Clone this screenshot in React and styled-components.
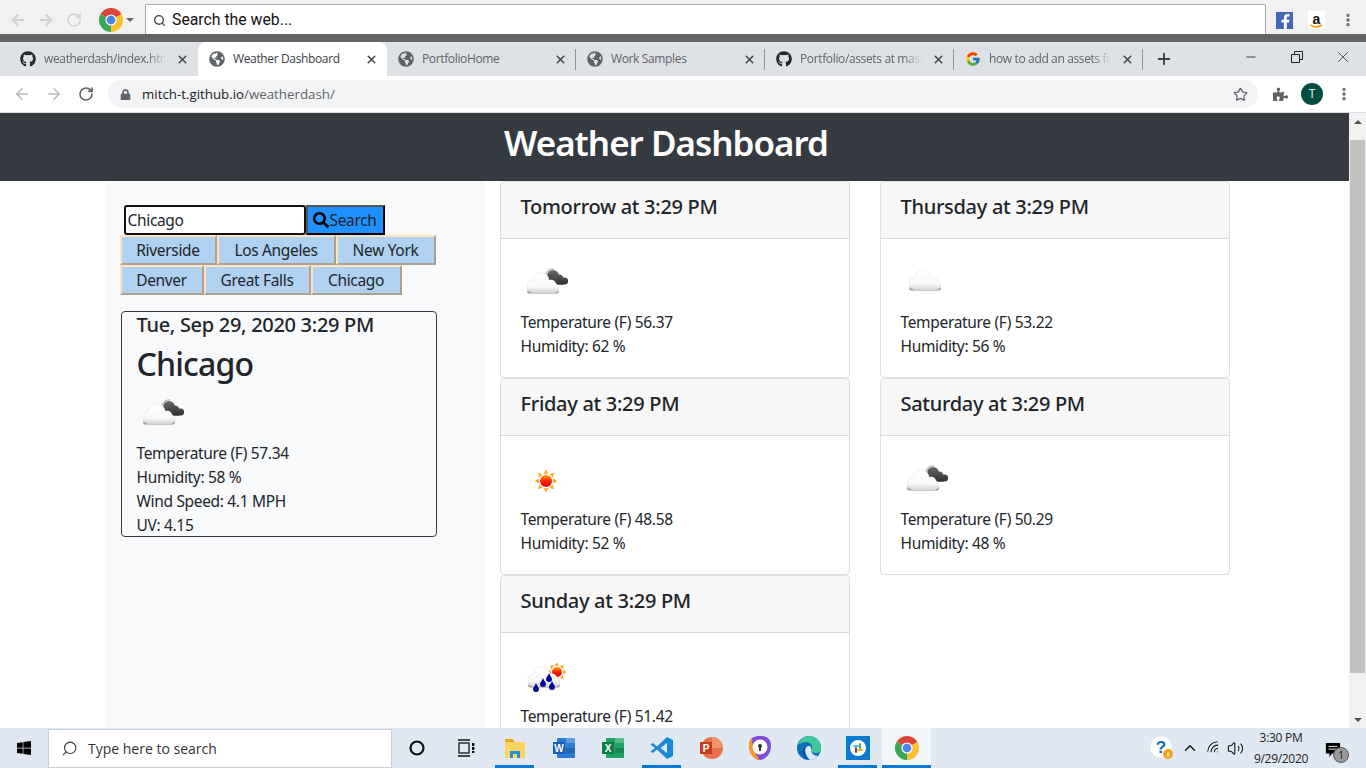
import React from 'react';
import styled, { createGlobalStyle } from 'styled-components';
import { ArrowLeft, ArrowRight, RotateCw, Star, X, Plus, Minus, EllipsisVertical, Search as LensIcon, ChevronUp, Volume2, Wifi } from 'lucide-react';
import { FaGithub, FaGlobeAmericas, FaLock, FaPuzzlePiece, FaWindows, FaFacebookF, FaSearch } from 'react-icons/fa';
import { FcGoogle } from 'react-icons/fc';

const GlobalStyle = createGlobalStyle`
  * { box-sizing: border-box; }
  html, body { margin: 0; height: 100%; overflow: hidden; }
  body {
    font-family: "Noto Sans", "Open Sans", sans-serif;
    font-size: 16px;
    line-height: 24px;
    color: #212529;
    background: #fff;
  }
`;

const Screen = styled.div`
  width: 1366px;
  height: 768px;
  display: flex;
  flex-direction: column;
  overflow: hidden;
`;

/* top bar of the browser extension */
const ExtBar = styled.div`
  height: 34px;
  flex: none;
  display: flex;
  align-items: flex-end;
  background: #f1f1f1;
  padding-left: 4px;
`;

const ExtNav = styled.div`
  width: 28px;
  height: 30px;
  padding-top: 2px;
  display: flex;
  align-items: center;
  justify-content: center;
  color: #d2d2d2;
`;

const ExtLogo = styled.div`
  width: 57px;
  height: 30px;
  padding: 2px 0 0 11px;
  display: flex;
  align-items: center;
  gap: 3px;
`;

const Caret = styled.span`
  border-left: 4px solid transparent;
  border-right: 4px solid transparent;
  border-top: 4px solid #666;
`;

const ExtSearch = styled.div`
  width: 1121px;
  height: 30px;
  display: flex;
  align-items: center;
  gap: 6px;
  padding: 1px 0 0 7px;
  background: #fff;
  border: 1px solid #aaa;
  border-bottom: none;
  border-radius: 2px 2px 0 0;
  font-family: "Roboto", sans-serif;
  font-size: 15.8px;
  color: #111;
`;

const ExtLinks = styled.div`
  display: flex;
  padding-left: 2px;
`;

const ExtRight = styled.div`
  width: 32px;
  height: 30px;
  padding-top: 2px;
  display: flex;
  align-items: center;
  justify-content: center;
  color: #666;
`;

const FbTile = styled.div`
  width: 17px;
  height: 17px;
  display: flex;
  align-items: flex-end;
  justify-content: flex-end;
  background: #4267b2;
  color: #fff;
  overflow: hidden;
`;

const DarkBand = styled.div`
  height: 8px;
  flex: none;
  background: #636466;
`;

const TabStrip = styled.div`
  height: 34px;
  flex: none;
  display: flex;
  background: #dee1e6;
  padding-left: 9px;
`;

const Tab = styled.div`
  width: 189px;
  height: 34px;
  display: flex;
  align-items: center;
  gap: 8px;
  padding: 0 8px 0 11px;
  position: relative;
  font-family: "Open Sans", sans-serif;
  font-size: 12px;
  letter-spacing: -0.36px;
  color: ${p => (p.$active ? '#3c4043' : '#5f6368')};
  background: ${p => (p.$active ? '#fff' : 'transparent')};
  border-radius: 8px 8px 0 0;
`;

const TabSep = styled.span`
  position: absolute;
  right: 0;
  top: 7px;
  bottom: 6px;
  width: 1px;
  background: #90949a;
`;

const TabTitle = styled.span`
  flex: 1;
  min-width: 0;
  overflow: hidden;
  white-space: nowrap;
  ${p => p.$fade && 'mask-image: linear-gradient(to right, #000 85%, transparent);'}
`;

const TabIcon = styled.span`
  width: 16px;
  height: 16px;
  flex: none;
  display: flex;
  color: #5f6368;
`;

const TabClose = styled.span`
  width: 16px;
  height: 16px;
  flex: none;
  display: flex;
  align-items: center;
  justify-content: center;
  color: #45484c;
`;

const NewTab = styled.div`
  width: 42px;
  display: flex;
  align-items: center;
  justify-content: center;
  color: #3c4043;
`;

const WindowControls = styled.div`
  margin-left: auto;
  display: flex;
`;

const WindowButton = styled.div`
  width: 46px;
  height: 30px;
  display: flex;
  align-items: center;
  justify-content: center;
  color: #222;
`;

const AddressBar = styled.div`
  height: 37px;
  flex: none;
  display: flex;
  align-items: center;
  background: #fff;
  padding-left: 6px;
  border-bottom: 1px solid #dadce0;
`;

const NavButton = styled.div`
  width: 32px;
  height: 28px;
  display: flex;
  align-items: center;
  justify-content: center;
  color: ${p => (p.$dim ? '#b6b8bb' : '#5f6368')};
`;

const Omnibox = styled.div`
  width: 1150px;
  height: 28px;
  margin-left: 6px;
  padding: 0 10px 0 12px;
  display: flex;
  align-items: center;
  gap: 11px;
  border-radius: 14px;
  background: #f1f3f4;
  color: #5f6368;
  font-family: "Open Sans", sans-serif;
  font-size: 13.3px;
`;

const Url = styled.span`
  flex: 1;
  color: #5f6368;
  b { font-weight: 400; color: #202124; }
`;

const Toolbar = styled.div`
  margin-left: 6px;
  display: flex;
  align-items: center;
`;

const ToolButton = styled.div`
  width: 32px;
  height: 28px;
  display: flex;
  align-items: center;
  justify-content: center;
  color: #5f6368;
`;

const Avatar = styled.div`
  width: 22px;
  height: 22px;
  border-radius: 50%;
  background: #004d40;
  color: #e8f0ee;
  font-size: 12px;
  line-height: 22px;
  text-align: center;
`;

/* the page itself */
const Viewport = styled.div`
  flex: 1;
  min-height: 0;
  display: flex;
`;

const Page = styled.div`
  flex: 1;
  min-width: 0;
  display: flex;
  flex-direction: column;
  overflow: hidden;
`;

const PageHeader = styled.header`
  height: 68px;
  flex: none;
  display: flex;
  align-items: center;
  justify-content: center;
  padding: 0 17px 10px 0;
  background: #343a40;
`;

const Title = styled.h1`
  margin: 0;
  font-size: 35px;
  line-height: 43px;
  font-weight: 600;
  letter-spacing: -1px;
  color: #fff;
`;

const Container = styled.div`
  width: 1140px;
  flex: 1;
  min-height: 0;
  margin: 0 auto;
  display: flex;
  font-size: 15.5px;
  letter-spacing: -0.33px;
`;

const Sidebar = styled.aside`
  width: 380px;
  flex: none;
  padding: 24px 15px 0;
  background: #f8f9fa;
`;

const SearchForm = styled.form`
  display: flex;
  height: 30px;
  margin-left: 4px;
`;

const CityInput = styled.input`
  width: 182px;
  height: 30px;
  padding: 0 2px;
  border: 2px solid #111;
  border-radius: 3px;
  background: #fff;
  outline: none;
  font: inherit;
  letter-spacing: inherit;
  color: #212529;
`;

const SearchButton = styled.button`
  width: 79px;
  height: 30px;
  padding: 0;
  display: flex;
  align-items: center;
  justify-content: center;
  background: #1e90ff;
  border: 2px outset #555;
  font: inherit;
  letter-spacing: inherit;
  color: #212529;
`;

const CityList = styled.div`
  display: flex;
  flex-wrap: wrap;
  width: 320px;
`;

const CityButton = styled.button`
  width: ${p => p.$width}px;
  height: 30px;
  padding: 0;
  background: #b0d1f0;
  border: 2px solid;
  border-color: #ffe4c4 #ab9f8f #ab9f8f #ffe4c4;
  font: inherit;
  letter-spacing: inherit;
  color: #212529;
`;

const CurrentCard = styled.section`
  width: 316px;
  height: 226px;
  margin: 16px 0 0 1px;
  padding: 1px 15px 0;
  border: 1px solid #343a40;
  border-radius: 4px;
  overflow: hidden;
  svg { margin-bottom: 1px; }
`;

const CardHeading = styled.h5`
  margin: 0 0 8px;
  font-size: 20px;
  line-height: 24px;
  font-weight: 500;
  letter-spacing: -0.3px;
`;

const CityName = styled.h2`
  margin: 1px 0 7px;
  font-size: 32px;
  line-height: 38.4px;
  font-weight: 500;
  letter-spacing: -0.8px;
`;

const Line = styled.p`
  margin: 0;
`;

const Forecast = styled.main`
  flex: 1;
  padding: 0 15px;
  display: grid;
  grid-template-columns: 350px 350px;
  column-gap: 30px;
  align-content: start;
`;

const ForecastCard = styled.article`
  height: 197px;
  border: 1px solid rgba(0, 0, 0, 0.125);
  border-radius: 4px;
  overflow: hidden;
`;

const ForecastHeader = styled.div`
  height: 57px;
  padding: 13px 20px 0;
  background: rgba(0, 0, 0, 0.03);
  border-bottom: 1px solid rgba(0, 0, 0, 0.125);
`;

const ForecastBody = styled.div`
  padding: 20px 20px 0;
  svg { margin-bottom: 1px; }
`;

const WeatherPic = styled.svg`
  display: block;
  width: 50px;
  height: 50px;
`;

const Scrollbar = styled.div`
  width: 17px;
  flex: none;
  display: flex;
  flex-direction: column;
  align-items: center;
  background: #f1f1f1;
`;

const ScrollArrow = styled.div`
  width: 17px;
  height: 17px;
  flex: none;
  display: flex;
  align-items: center;
  justify-content: center;
  &::before {
    content: '';
    border-left: 4px solid transparent;
    border-right: 4px solid transparent;
    ${p => (p.$down ? 'border-top: 4px solid #505050;' : 'border-bottom: 4px solid #505050;')}
  }
`;

const ScrollThumb = styled.div`
  width: 15px;
  height: 533px;
  margin-top: 10px;
  background: #c1c1c1;
`;

const ScrollGap = styled.div`
  flex: 1;
`;

/* windows taskbar */
const Taskbar = styled.footer`
  height: 40px;
  flex: none;
  display: flex;
  align-items: center;
  background: #e0e8f3;
`;

const StartButton = styled.div`
  width: 48px;
  display: flex;
  align-items: center;
  justify-content: center;
  color: #000;
`;

const TaskSearch = styled.div`
  width: 344px;
  height: 39px;
  display: flex;
  align-items: center;
  gap: 10px;
  padding: 1px 0 0 12px;
  background: #fff;
  border: 1px solid #c9cfd6;
  font-family: "Open Sans", sans-serif;
  font-size: 14px;
  color: #333;
`;

const TaskLens = styled(LensIcon)`
  transform: scaleX(-1);
`;

const TaskItem = styled.div`
  width: 49px;
  height: 40px;
  display: flex;
  align-items: center;
  justify-content: center;
  background: ${p => (p.$current ? '#f2f5f9' : 'transparent')};
  ${p => p.$open && 'box-shadow: inset 0 -3px 0 0 #0078d7;'}
  ${p => p.$open && !p.$current && 'clip-path: inset(0 5px);'}
`;

const Tray = styled.div`
  margin-left: auto;
  display: flex;
  align-items: center;
  color: #111;
`;

const TrayIcon = styled.div`
  width: ${p => p.$w}px;
  height: 40px;
  display: flex;
  align-items: center;
  justify-content: center;
`;

const TrayWifi = styled(Wifi)`
  transform: rotate(-45deg);
`;

const Clock = styled.div`
  width: 72px;
  text-align: center;
  font-family: "Open Sans", sans-serif;
  font-size: 12px;
  line-height: 21px;
  letter-spacing: -0.3px;
  color: #222;
`;

const Notify = styled.div`
  width: 49px;
  height: 40px;
  padding: 12px 0 0 8px;
  position: relative;
`;

const NotifyBadge = styled.span`
  position: absolute;
  right: 17px;
  bottom: 5px;
  width: 16px;
  height: 16px;
  border-radius: 50%;
  background: #9a9a9a;
  border: 1px solid #555;
  font-family: "Open Sans", sans-serif;
  font-size: 10px;
  line-height: 14px;
  text-align: center;
  color: #111;
`;

/* drawn pictures */
const ChromeLogo = ({ size = 24 }) => (
  <svg width={size} height={size} viewBox="0 0 24 24">
    <path d="M12 12 1.6 6A12 12 0 0 1 22.4 6Z" fill="#db4437" />
    <path d="M12 12 22.4 6A12 12 0 0 1 12 24Z" fill="#fbc02d" />
    <path d="M12 12 12 24A12 12 0 0 1 1.6 6Z" fill="#3aa757" />
    <circle cx="12" cy="12" r="5.6" fill="#fff" />
    <circle cx="12" cy="12" r="4.4" fill="#4a86e8" />
  </svg>
);

const AmazonTile = () => (
  <svg width="17" height="18" viewBox="0 0 17 18">
    <rect width="17" height="18" fill="#fff" />
    <text x="8.500" y="13" textAnchor="middle" fontSize="14" fontWeight="700" fontFamily="Liberation Sans" fill="#111">a</text>
    <path d="M2.500 14c3 2.500 8 2.500 11.500 0" fill="none" stroke="#f90" strokeWidth="1.600" />
  </svg>
);

const Gradients = () => (
  <defs>
    <linearGradient id="cloudFill" gradientUnits="userSpaceOnUse" x1="0" y1="14" x2="0" y2="34">
      <stop offset="0" stopColor="#fff" />
      <stop offset="0.7" stopColor="#f8f8f8" />
      <stop offset="1" stopColor="#d2d2d2" />
    </linearGradient>
    <linearGradient id="cloudBase" gradientUnits="userSpaceOnUse" x1="0" y1="29" x2="0" y2="35">
      <stop offset="0" stopColor="#e2e2e2" />
      <stop offset="1" stopColor="#8c8c8c" />
    </linearGradient>
    <linearGradient id="darkFill" gradientUnits="userSpaceOnUse" x1="0" y1="11" x2="0" y2="26">
      <stop offset="0" stopColor="#6a6a6a" />
      <stop offset="1" stopColor="#2e2e2e" />
    </linearGradient>
    <linearGradient id="sunFill" x1="0" y1="0" x2="0" y2="1">
      <stop offset="0" stopColor="#ffa000" />
      <stop offset="0.55" stopColor="#ff1a00" />
      <stop offset="1" stopColor="#f00000" />
    </linearGradient>
  </defs>
);

const CloudShapes = () => (
  <>
    <circle cx="12" cy="27" r="6" />
    <circle cx="20" cy="22" r="8" />
    <circle cx="30" cy="26" r="5" />
    <circle cx="33" cy="29" r="4.5" />
    <rect x="9" y="26" width="26" height="7.5" rx="3" />
  </>
);

const WhiteCloud = ({ dx = 0, dy = 0 }) => (
  <g transform={`translate(${dx} ${dy})`}>
    <rect x="6" y="30" width="32" height="4.5" rx="2.2" fill="url(#cloudBase)" />
    <g fill="#dcdcdc" stroke="#dcdcdc" strokeWidth="0.8"><CloudShapes /></g>
    <g fill="url(#cloudFill)"><CloudShapes /></g>
  </g>
);

const DarkCloud = () => (
  <g>
    <path d="M25 20A7.500 7.500 0 0 1 33 10" fill="none" stroke="#b5b5b5" strokeWidth="1.200" />
    <g fill="url(#darkFill)">
      <circle cx="32" cy="17" r="6" />
      <circle cx="38" cy="20" r="4.500" />
      <circle cx="43.500" cy="22" r="3.600" />
      <rect x="30" y="20" width="14" height="5.800" rx="2.800" />
    </g>
  </g>
);

const Sun = ({ cx = 25, cy = 25, r = 6, ray = 11.5 }) => (
  <g>
    {[0, 45, 90, 135, 180, 225, 270, 315].map(a => (
      <path
        key={a}
        transform={`rotate(${a} ${cx} ${cy})`}
        d={`M${cx - 2.4} ${cy - r - 1.2} L${cx} ${cy - ray} L${cx + 2.4} ${cy - r - 1.2}Z`}
        fill="#ffa726"
      />
    ))}
    <circle cx={cx} cy={cy} r={r} fill="url(#sunFill)" />
  </g>
);

const Drop = ({ x, y }) => (
  <path d={`M${x} ${y - 5}C${x + 1} ${y - 2} ${x + 3} ${y - 1} ${x + 3} ${y + 1}A3 3 0 0 1 ${x - 3} ${y + 1}C${x - 3} ${y - 1} ${x - 1} ${y - 2} ${x} ${y - 5}Z`} fill="#00068f" />
);

const WeatherIcon = ({ kind }) => (
  <WeatherPic viewBox="0 0 50 50">
    <Gradients />
    {kind === 'broken' && (
      <>
        <DarkCloud />
        <WhiteCloud />
      </>
    )}
    {kind === 'cloud' && <WhiteCloud dx={2} dy={-3} />}
    {kind === 'sun' && <Sun />}
    {kind === 'rain' && (
      <>
        <Sun cx={36} cy={19} r={5} ray={9.5} />
        <WhiteCloud dx={1} />
        <Drop x={15} y={35} />
        <Drop x={22} y={30} />
        <Drop x={28} y={25} />
        <Drop x={31} y={33} />
      </>
    )}
  </WeatherPic>
);

const RestoreIcon = () => (
  <svg width="12" height="12" viewBox="0 0 12 12" fill="none" stroke="#222">
    <path d="M.5 3.5h8v8h-8zM3.5 3V.5h8v8H9" />
  </svg>
);

const TaskViewIcon = () => (
  <svg width="18" height="18" viewBox="0 0 18 18" fill="none" stroke="#111" strokeWidth="1.3">
    <path d="M1 1h12M1 17h12" />
    <rect x="2" y="4" width="10" height="10" />
    <rect x="15" y="4" width="2.4" height="3" fill="#111" stroke="none" />
    <rect x="15" y="8" width="2.4" height="3" fill="#111" stroke="none" />
    <rect x="15" y="12" width="2.4" height="2" fill="#111" stroke="none" />
  </svg>
);

const FolderIcon = () => (
  <svg width="24" height="24" viewBox="0 0 24 24">
    <path d="M2 3h8l2 3H2z" fill="#e8a820" />
    <rect x="2" y="6" width="20" height="16" fill="#fcd462" />
    <rect x="7" y="15" width="10" height="7" fill="#2a8fd8" />
    <rect x="10" y="18" width="4" height="4" fill="#fcd462" />
  </svg>
);

const OfficeIcon = ({ letter, back, tile }) => (
  <svg width="24" height="24" viewBox="0 0 24 24">
    <rect x="5" y="2" width="18" height="20" rx="1" fill={back} />
    <rect x="14" y="2" width="9" height="5" fill="#fff" opacity=".25" />
    <rect x="14" y="12" width="9" height="5" fill="#000" opacity=".18" />
    <rect x="1" y="6" width="12" height="12" fill={tile} />
    <text x="7" y="15.5" textAnchor="middle" fontSize="10" fontWeight="700" fontFamily="Liberation Sans" fill="#fff">{letter}</text>
  </svg>
);

const VsCodeIcon = () => (
  <svg width="24" height="26" viewBox="0 0 24 24">
    <path d="M17 1 23 4v16l-6 3-10-9.600L2.700 17 .5 15.500 5 12 .5 8.500 2.700 7 7 10.600Z" fill="#1e88d8" />
    <path d="M17 7 10.500 12l6.500 5Z" fill="#e0e8f3" />
  </svg>
);

const PowerPointIcon = () => (
  <svg width="24" height="24" viewBox="0 0 24 24">
    <circle cx="13" cy="12" r="11" fill="#e8704d" />
    <path d="M13 1a11 11 0 0 1 11 11H13Z" fill="#f0936f" />
    <rect x="1" y="6" width="12" height="12" fill="#c43e1c" />
    <text x="7" y="15.500" textAnchor="middle" fontSize="10" fontWeight="700" fontFamily="Liberation Sans" fill="#fff">P</text>
  </svg>
);

const SecureIcon = () => (
  <svg width="24" height="26" viewBox="0 0 24 26">
    <path d="M12 1C18 1 23 3 23 11C23 19 17 25 12 25C7 25 1 19 1 11C1 3 6 1 12 1Z" fill="#7c4dd8" />
    <path d="M12 25C7 25 1 19 1 11C1 7 2 5 4 3C4 12 8 20 12 25Z" fill="#f59a23" />
    <circle cx="12" cy="12" r="7.500" fill="#fff" />
    <circle cx="12" cy="11" r="2" fill="#333" />
    <rect x="11" y="12" width="2" height="4" fill="#333" />
  </svg>
);

const EdgeIcon = () => (
  <svg width="24" height="24" viewBox="0 0 24 24">
    <circle cx="12" cy="12" r="12" fill="#0f6cbd" />
    <path d="M1 9C3 2 9 0 12 0c7 0 12 5 12 12 0 3-2 5-5 5-3 0-5-1-5-3 0-1 1-1 1-3 0-3-3-5-6-5-4 0-7 2-8 3Z" fill="#3fc99a" />
    <path d="M14 14c0 3 3 6 7 6-2 2-5 4-8 4 -3-3-5-6-5-10 0-2 2-4 4-4s2 2 2 4Z" fill="#e0e8f3" />
    <path d="M12 24c-3-3-4-6-4-10 0-1 .4-2 1-2.600C6 12 5 15 6 18c1 3 3 5 6 6Z" fill="#0a4f9e" />
  </svg>
);

const SlackIcon = () => (
  <svg width="24" height="24" viewBox="0 0 24 24">
    <rect width="24" height="24" fill="#0c78d0" />
    <circle cx="12" cy="12" r="8" fill="#fff" />
    <rect x="7" y="9" width="6" height="2" rx="1" fill="#36c5f0" />
    <rect x="13" y="7" width="2" height="6" rx="1" fill="#2eb67d" />
    <rect x="11" y="13" width="6" height="2" rx="1" fill="#ecb22e" />
    <rect x="9" y="11" width="2" height="6" rx="1" fill="#e01e5a" />
  </svg>
);

const HelpIcon = () => (
  <svg width="24" height="24" viewBox="0 0 24 24">
    <circle cx="11" cy="11" r="10.500" fill="#fff" />
    <text x="11" y="17" textAnchor="middle" fontSize="17" fontWeight="700" fontFamily="Liberation Sans" fill="#0a6ccf">?</text>
    <circle cx="18" cy="18" r="5" fill="#f3a21c" />
    <rect x="17.300" y="16.500" width="1.400" height="4" fill="#fff" />
  </svg>
);

const NotifyIcon = () => (
  <svg width="16" height="16" viewBox="0 0 18 18">
    <path d="M1 1h16v12H8l-3 4v-4H1z" fill="#000" />
    <path d="M4 5h10M4 8h10" stroke="#fff" />
  </svg>
);

const tabs = [
  { title: 'weatherdash/index.html', icon: <FaGithub size={16} color="#24292e" />, fade: true },
  { title: 'Weather Dashboard', icon: <FaGlobeAmericas size={16} />, active: true },
  { title: 'PortfolioHome', icon: <FaGlobeAmericas size={16} />, sep: true },
  { title: 'Work Samples', icon: <FaGlobeAmericas size={16} />, sep: true },
  { title: 'Portfolio/assets at master', icon: <FaGithub size={16} color="#24292e" />, fade: true, sep: true },
  { title: 'how to add an assets folder', icon: <FcGoogle size={16} />, fade: true, sep: true },
];

const cityRows = [
  { name: 'Riverside', width: 97 },
  { name: 'Los Angeles', width: 119 },
  { name: 'New York', width: 100 },
  { name: 'Denver', width: 84 },
  { name: 'Great Falls', width: 107 },
  { name: 'Chicago', width: 91 },
];

const forecast = [
  { day: 'Tomorrow', icon: 'broken', temp: '56.37', humidity: 62 },
  { day: 'Thursday', icon: 'cloud', temp: '53.22', humidity: 56 },
  { day: 'Friday', icon: 'sun', temp: '48.58', humidity: 52 },
  { day: 'Saturday', icon: 'broken', temp: '50.29', humidity: 48 },
  { day: 'Sunday', icon: 'rain', temp: '51.42', humidity: 50 },
];

const App = () => (
  <Screen>
    <GlobalStyle />

    <ExtBar>
      <ExtNav><ArrowLeft size={18} strokeWidth={2.5} /></ExtNav>
      <ExtNav><ArrowRight size={18} strokeWidth={2.5} /></ExtNav>
      <ExtNav><RotateCw size={16} strokeWidth={2.5} /></ExtNav>
      <ExtLogo><ChromeLogo /><Caret /></ExtLogo>
      <ExtSearch><LensIcon size={13} strokeWidth={2.5} color="#444" />Search the web...</ExtSearch>
      <ExtLinks>
        <ExtRight><FbTile><FaFacebookF size={15} /></FbTile></ExtRight>
        <ExtRight><AmazonTile /></ExtRight>
        <ExtRight><EllipsisVertical size={16} strokeWidth={3} /></ExtRight>
      </ExtLinks>
    </ExtBar>
    <DarkBand />

    <TabStrip>
      {tabs.map(tab => (
        <Tab key={tab.title} $active={tab.active}>
          <TabIcon>{tab.icon}</TabIcon>
          <TabTitle $fade={tab.fade}>{tab.title}</TabTitle>
          <TabClose><X size={13} strokeWidth={3} /></TabClose>
          {tab.sep && <TabSep />}
        </Tab>
      ))}
      <NewTab><Plus size={18} strokeWidth={2.5} /></NewTab>
      <WindowControls>
        <WindowButton><Minus size={14} strokeWidth={1.5} /></WindowButton>
        <WindowButton><RestoreIcon /></WindowButton>
        <WindowButton><X size={18} strokeWidth={1} /></WindowButton>
      </WindowControls>
    </TabStrip>

    <AddressBar>
      <NavButton $dim><ArrowLeft size={18} /></NavButton>
      <NavButton $dim><ArrowRight size={18} /></NavButton>
      <NavButton><RotateCw size={16} strokeWidth={2.5} /></NavButton>
      <Omnibox>
        <FaLock size={11} />
        <Url><b>mitch-t.github.io</b>/weatherdash/</Url>
        <Star size={15} strokeWidth={2} />
      </Omnibox>
      <Toolbar>
        <ToolButton><FaPuzzlePiece size={15} /></ToolButton>
        <ToolButton><Avatar>T</Avatar></ToolButton>
        <ToolButton><EllipsisVertical size={16} strokeWidth={3} /></ToolButton>
      </Toolbar>
    </AddressBar>

    <Viewport>
      <Page>
        <PageHeader>
          <Title>Weather Dashboard</Title>
        </PageHeader>
        <Container>
          <Sidebar>
            <SearchForm onSubmit={e => e.preventDefault()}>
              <CityInput defaultValue="Chicago" />
              <SearchButton type="submit"><FaSearch size={16} color="#000" />Search</SearchButton>
            </SearchForm>
            <CityList>
              {cityRows.map(city => (
                <CityButton key={city.name} $width={city.width}>{city.name}</CityButton>
              ))}
            </CityList>
            <CurrentCard>
              <CardHeading>Tue, Sep 29, 2020 3:29 PM</CardHeading>
              <CityName>Chicago</CityName>
              <WeatherIcon kind="broken" />
              <Line>Temperature (F) 57.34</Line>
              <Line>Humidity: 58 %</Line>
              <Line>Wind Speed: 4.1 MPH</Line>
              <Line>UV: 4.15</Line>
            </CurrentCard>
          </Sidebar>
          <Forecast>
            {forecast.map(item => (
              <ForecastCard key={item.day}>
                <ForecastHeader>
                  <CardHeading>{item.day} at 3:29 PM</CardHeading>
                </ForecastHeader>
                <ForecastBody>
                  <WeatherIcon kind={item.icon} />
                  <Line>Temperature (F) {item.temp}</Line>
                  <Line>Humidity: {item.humidity} %</Line>
                </ForecastBody>
              </ForecastCard>
            ))}
          </Forecast>
        </Container>
      </Page>
      <Scrollbar>
        <ScrollArrow />
        <ScrollThumb />
        <ScrollGap />
        <ScrollArrow $down />
      </Scrollbar>
    </Viewport>

    <Taskbar>
      <StartButton><FaWindows size={16} /></StartButton>
      <TaskSearch>
        <TaskLens size={17} strokeWidth={1.5} />
        Type here to search
      </TaskSearch>
      <TaskItem>
        <svg width="16" height="16" viewBox="0 0 16 16"><circle cx="8" cy="8" r="6.500" fill="none" stroke="#111" strokeWidth="2.200" /></svg>
      </TaskItem>
      <TaskItem><TaskViewIcon /></TaskItem>
      <TaskItem $open><FolderIcon /></TaskItem>
      <TaskItem><OfficeIcon letter="W" back="#2b7cd3" tile="#185abd" /></TaskItem>
      <TaskItem><OfficeIcon letter="X" back="#21a366" tile="#107c41" /></TaskItem>
      <TaskItem $open><VsCodeIcon /></TaskItem>
      <TaskItem><PowerPointIcon /></TaskItem>
      <TaskItem><SecureIcon /></TaskItem>
      <TaskItem><EdgeIcon /></TaskItem>
      <TaskItem $open><SlackIcon /></TaskItem>
      <TaskItem $open $current><ChromeLogo /></TaskItem>
      <Tray>
        <TrayIcon $w={30}><HelpIcon /></TrayIcon>
        <TrayIcon $w={26}><ChevronUp size={18} strokeWidth={1.8} /></TrayIcon>
        <TrayIcon $w={22}><TrayWifi size={16} strokeWidth={1.6} /></TrayIcon>
        <TrayIcon $w={20}><Volume2 size={17} strokeWidth={1.5} /></TrayIcon>
        <Clock>3:30 PM<br />9/29/2020</Clock>
        <Notify><NotifyIcon /><NotifyBadge>1</NotifyBadge></Notify>
      </Tray>
    </Taskbar>
  </Screen>
);

export default App;
